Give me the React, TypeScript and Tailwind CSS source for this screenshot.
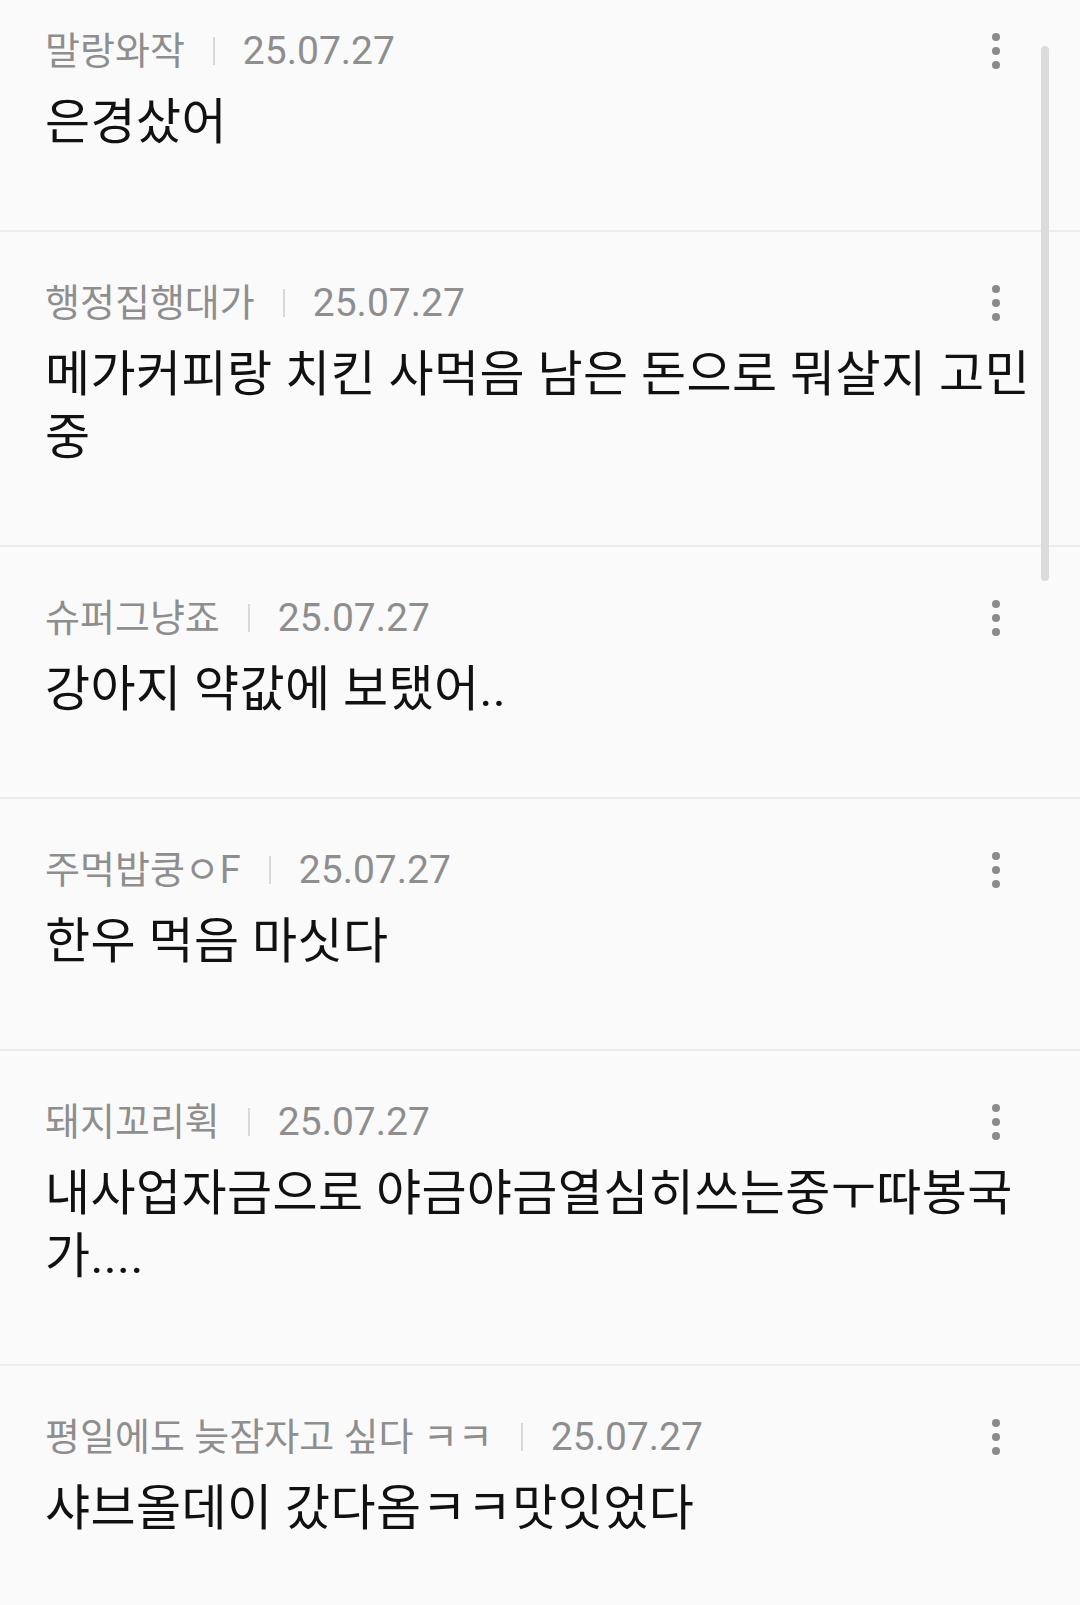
import React from "react";

type Item = { name: string; date: string; text: string };

const items: Item[] = [
  { name: "말랑와작", date: "25.07.27", text: "은경샀어" },
  { name: "행정집행대가", date: "25.07.27", text: "메가커피랑 치킨 사먹음 남은 돈으로 뭐살지 고민중" },
  { name: "슈퍼그냥죠", date: "25.07.27", text: "강아지 약값에 보탰어.." },
  { name: "주먹밥쿵ㅇF", date: "25.07.27", text: "한우 먹음 마싯다" },
  { name: "돼지꼬리휙", date: "25.07.27", text: "내사업자금으로 야금야금열심히쓰는중ㅜ따봉국가...." },
  { name: "평일에도 늦잠자고 싶다 ㅋㅋ", date: "25.07.27", text: "샤브올데이 갔다옴ㅋㅋ맛잇었다" },
];

function Dots() {
  return (
    <div className="flex flex-col items-center gap-[6px] mr-[40px]">
      <span className="block w-[8px] h-[8px] rounded-full bg-[#8a8a8a]" />
      <span className="block w-[8px] h-[8px] rounded-full bg-[#8a8a8a]" />
      <span className="block w-[8px] h-[8px] rounded-full bg-[#8a8a8a]" />
    </div>
  );
}

function Row({ item, first }: { item: Item; first: boolean }) {
  return (
    <div
      className={`border-b-2 border-[#ececec] pl-[45px] pr-[40px] pb-[76px] ${
        first ? "pt-[27px]" : "pt-[47px]"
      }`}
    >
      <div className="flex items-center justify-between h-[48px]">
        <div className="flex items-center">
          <span className="text-[38px] text-[#8e8e8e] leading-none">{item.name}</span>
          <span className="block w-[2px] h-[28px] bg-[#d9d9d9] mx-[28px]" />
          <span
            className="text-[39px] text-[#8e8e8e] leading-none"
            style={{ fontFamily: "Roboto, 'Liberation Sans', sans-serif" }}
          >
            {item.date}
          </span>
        </div>
        <Dots />
      </div>
      <div className="mt-[16px] text-[49px] leading-[63px] tracking-[0.4px] text-[#111111] break-all">
        {item.text}
      </div>
    </div>
  );
}

export default function App() {
  return (
    <div
      className="relative w-[1080px] h-[1605px] overflow-hidden bg-[#fafafa]"
      style={{ fontFamily: "Roboto, 'Noto Sans CJK KR', sans-serif" }}
    >
      {items.map((it, i) => (
        <Row key={i} item={it} first={i === 0} />
      ))}
      <div className="absolute left-[1041px] top-[46px] w-[8px] h-[535px] rounded-full bg-[#dcdcdc]" />
    </div>
  );
}
